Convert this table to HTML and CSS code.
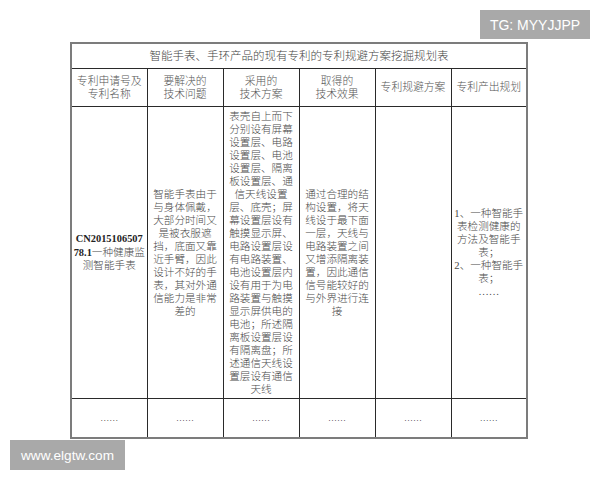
FILE: index.html
```html
<!DOCTYPE html>
<html lang="zh">
<head>
<meta charset="utf-8">
<title>专利规避方案挖掘规划表</title>
<link rel="stylesheet" href="styles.css">
</head>
<body>
<div class="page">
  <table class="plan">
    <colgroup>
      <col class="c"><col class="c"><col class="c"><col class="c"><col class="c"><col class="c">
    </colgroup>
    <tr class="r-title">
      <td colspan="6" class="title">智能手表、手环产品的现有专利的专利规避方案挖掘规划表</td>
    </tr>
    <tr class="r-head">
      <td>专利申请号及<br>专利名称</td>
      <td>要解决的<br>技术问题</td>
      <td>采用的<br>技术方案</td>
      <td>取得的<br>技术效果</td>
      <td>专利规避方案</td>
      <td>专利产出规划</td>
    </tr>
    <tr class="r-body">
      <td class="num"><b>CN2015106507</b><br><b>78.1</b>一种健康监<br>测智能手表</td>
      <td>智能手表由于<br>与身体佩戴，<br>大部分时间又<br>是被衣服遮<br>挡，底面又靠<br>近手臂，因此<br>设计不好的手<br>表，其对外通<br>信能力是非常<br>差的</td>
      <td>表壳自上而下<br>分别设有屏幕<br>设置层、电路<br>设置层、电池<br>设置层、隔离<br>板设置层、通<br>信天线设置<br>层、底壳；屏<br>幕设置层设有<br>触摸显示屏、<br>电路设置层设<br>有电路装置、<br>电池设置层内<br>设有用于为电<br>路装置与触摸<br>显示屏供电的<br>电池；所述隔<br>离板设置层设<br>有隔离盘；所<br>述通信天线设<br>置层设有通信<br>天线</td>
      <td>通过合理的结<br>构设置，将天<br>线设于最下面<br>一层，天线与<br>电路装置之间<br>又增添隔离装<br>置，因此通信<br>信号能较好的<br>与外界进行连<br>接</td>
      <td></td>
      <td>1、一种智能手<br>表检测健康的<br>方法及智能手<br>表；<br>2、一种智能手<br>表；<br>……</td>
    </tr>
    <tr class="r-more">
      <td>……</td><td>……</td><td>……</td><td>……</td><td>……</td><td>……</td>
    </tr>
  </table>
  <div class="mark mark-tg">TG: MYYJJPP</div>
  <div class="mark mark-www">www.elgtw.com</div>
</div>
</body>
</html>
```

FILE: styles.css
```css
html, body {
  margin: 0;
  padding: 0;
  background: #ffffff;
}

.page {
  position: relative;
  width: 600px;
  height: 480px;
  padding-top: 42px;
  box-sizing: border-box;
  font-family: "Liberation Serif", "Noto Sans CJK SC", serif;
}

.plan {
  margin-left: 70px;
  width: 457px;
  table-layout: fixed;
  border-collapse: collapse;
  border: 2px solid #7c7c7c;
}

.plan col.c {
  width: 76px;
}

.plan td {
  border: 1px solid #2a2a2a;
  padding: 0;
  text-align: center;
  vertical-align: middle;
  white-space: nowrap;
  color: #4a4a4a;
  font-size: 10.6px;
  line-height: 13px;
  font-weight: 300;
}

.r-title td {
  height: 24px;
  font-size: 11.5px;
  color: #444444;
}

.r-head td {
  height: 37px;
  font-size: 10.8px;
  color: #555555;
}

.r-body td {
  height: 291px;
}

.r-body td.num {
  line-height: 13.5px;
}

.r-body td.num b {
  font-weight: 700;
  color: #222222;
  font-size: 10.4px;
}

.r-more td {
  height: 38px;
  font-size: 9px;
  color: #333333;
}

.mark {
  position: absolute;
  background: #a9a9a9;
  color: #ffffff;
  font-family: "Liberation Sans", Arial, sans-serif;
  font-size: 14px;
  display: flex;
  align-items: center;
  justify-content: center;
}

.mark-tg {
  left: 480px;
  top: 10px;
  width: 110px;
  height: 29px;
}

.mark-www {
  left: 10px;
  top: 440px;
  width: 115px;
  height: 30px;
  font-size: 13.6px;
}
```
